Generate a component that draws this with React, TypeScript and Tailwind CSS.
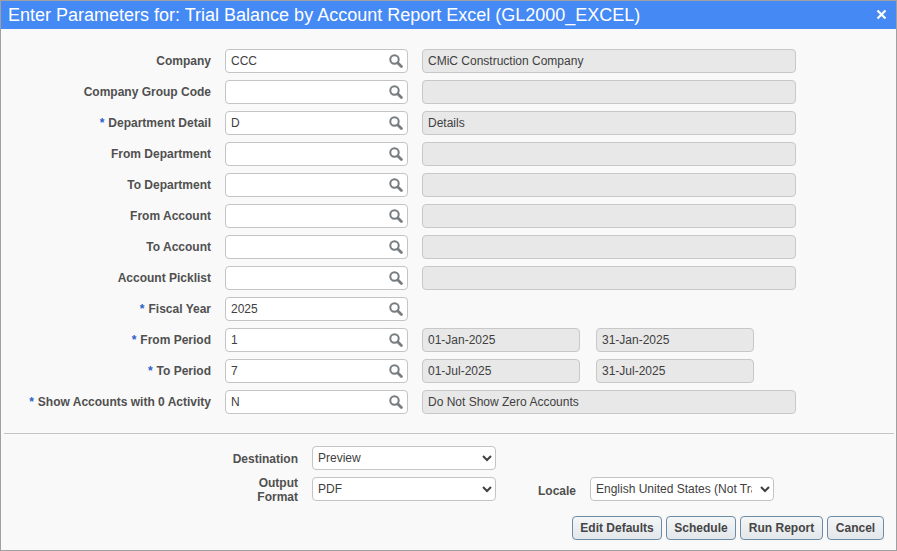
import React from "react";

const font = { fontFamily: '"Liberation Sans", Arial, sans-serif' };

function Search() {
  return (
    <svg width="14" height="14" viewBox="0 0 14 14" className="shrink-0" fill="none">
      <circle cx="5.5" cy="5.5" r="4.2" stroke="#777c80" strokeWidth="2" />
      <path d="M8.9 8.9 L12.4 12.4" stroke="#777c80" strokeWidth="2.8" strokeLinecap="round" />
    </svg>
  );
}

function Lookup({ value }: { value: string }) {
  return (
    <div className="flex h-[24px] w-[183px] shrink-0 items-center justify-between rounded-[4px] border border-[#c4c4c4] bg-white pl-[5px] pr-[4px] text-[12px] text-[#404040]">
      <span>{value}</span>
      <Search />
    </div>
  );
}

function Desc({ value, w }: { value: string; w: string }) {
  return (
    <div className={`flex h-[24px] shrink-0 items-center rounded-[4px] border border-[#c8c8c8] bg-[#e8e8e8] pl-[5px] text-[12px] text-[#404040] ${w}`}>
      {value}
    </div>
  );
}

function Row({ label, req, value, children }: { label: string; req?: boolean; value: string; children?: React.ReactNode }) {
  return (
    <div className="flex h-[24px] items-center">
      <div className="w-[211px] shrink-0 pr-0 text-right text-[12px] font-bold text-[#505050]">
        {req && <span className="mr-[4px] text-[#2a62c9]">*</span>}
        {label}
      </div>
      <div className="ml-[14px] flex items-center gap-[14px]">
        <Lookup value={value} />
        {children}
      </div>
    </div>
  );
}

function Dates({ a, b }: { a: string; b: string }) {
  return (
    <div className="flex gap-[16px]">
      <Desc value={a} w="w-[158px]" />
      <Desc value={b} w="w-[158px]" />
    </div>
  );
}

function Btn({ children, w }: { children: React.ReactNode; w: string }) {
  return (
    <button className={`h-[24px] rounded-[4px] border border-[#6d8ba3] bg-gradient-to-b from-[#f4f6f7] to-[#e3e7ea] text-[12px] font-bold text-[#454545] ${w}`}>
      {children}
    </button>
  );
}

const sel = "h-[24px] rounded-[4px] border border-[#c4c4c4] bg-white pl-[1px] text-[12px] text-[#404040]";

export default function App() {
  return (
    <div className="flex h-[551px] w-[897px] flex-col overflow-hidden border border-[#a0a0a0] bg-[#f9f9f9]" style={font}>
      <div className="flex h-[28px] shrink-0 items-center justify-between bg-[#4589f5] pb-[1px] pl-[7px] pr-[9px] text-white">
        <span className="text-[18px] leading-none">Enter Parameters for: Trial Balance by Account Report Excel (GL2000_EXCEL)</span>
        <svg width="11" height="11" viewBox="0 0 11 11">
          <path d="M1.5 1.5 L9.5 9.5 M9.5 1.5 L1.5 9.5" stroke="#fff" strokeWidth="2.2" />
        </svg>
      </div>
      <div className="-ml-px mt-[20px] flex flex-col gap-[7px]">
        <Row label="Company" value="CCC"><Desc value="CMiC Construction Company" w="w-[374px]" /></Row>
        <Row label="Company Group Code" value=""><Desc value="" w="w-[374px]" /></Row>
        <Row label="Department Detail" req value="D"><Desc value="Details" w="w-[374px]" /></Row>
        <Row label="From Department" value=""><Desc value="" w="w-[374px]" /></Row>
        <Row label="To Department" value=""><Desc value="" w="w-[374px]" /></Row>
        <Row label="From Account" value=""><Desc value="" w="w-[374px]" /></Row>
        <Row label="To Account" value=""><Desc value="" w="w-[374px]" /></Row>
        <Row label="Account Picklist" value=""><Desc value="" w="w-[374px]" /></Row>
        <Row label="Fiscal Year" req value="2025" />
        <Row label="From Period" req value="1"><Dates a="01-Jan-2025" b="31-Jan-2025" /></Row>
        <Row label="To Period" req value="7"><Dates a="01-Jul-2025" b="31-Jul-2025" /></Row>
        <Row label="Show Accounts with 0 Activity" req value="N"><Desc value="Do Not Show Zero Accounts" w="w-[374px]" /></Row>
      </div>
      <div className="ml-[3px] mr-[2px] mt-[19px] h-px shrink-0 bg-[#c4c4c4]" />
      <div className="mt-[12px] flex h-[24px] items-center">
        <div className="mt-[2px] w-[297px] shrink-0 text-right text-[12px] font-bold text-[#505050]">Destination</div>
        <select defaultValue="Preview" className={`ml-[14px] w-[184px] ${sel}`}>
          <option>Preview</option>
        </select>
      </div>
      <div className="mt-[7px] flex h-[24px] items-center">
        <div className="mt-[2px] w-[297px] shrink-0 text-right text-[12px] font-bold leading-[14px] text-[#505050]">
          Output<br />Format
        </div>
        <select defaultValue="PDF" className={`ml-[14px] w-[184px] ${sel}`}>
          <option>PDF</option>
        </select>
        <div className="ml-[42px] mt-[4px] w-[38px] shrink-0 text-right text-[12px] font-bold text-[#505050]">Locale</div>
        <select defaultValue="en" className={`ml-[14px] w-[184px] pr-[5px] ${sel}`}>
          <option value="en">English United States (Not Translated)</option>
        </select>
      </div>
      <div className="mr-[12px] mt-[15px] flex justify-end gap-[4px]">
        <Btn w="w-[90px]">Edit Defaults</Btn>
        <Btn w="w-[70px]">Schedule</Btn>
        <Btn w="w-[83px]">Run Report</Btn>
        <Btn w="w-[57px]">Cancel</Btn>
      </div>
    </div>
  );
}
